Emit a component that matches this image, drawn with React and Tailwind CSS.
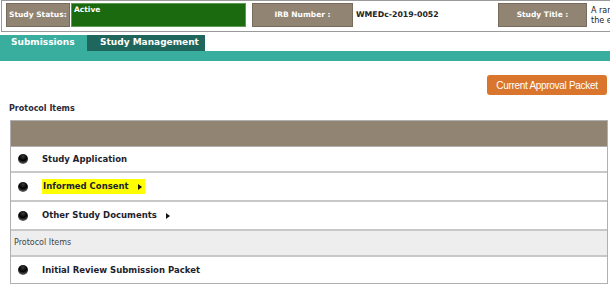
import React from "react";

const Bullet = () => (
  <span className="inline-block shrink-0 w-[10px] h-[10px] rounded-full bg-[radial-gradient(circle_at_50%_25%,#3a3a3a_0%,#000_45%,#9a9a9a_100%)]" />
);

const Caret = () => (
  <svg width="4" height="6" viewBox="0 0 4 6" className="ml-[9px] inline-block">
    <path d="M0 0 L4 3 L0 6 Z" fill="#111" />
  </svg>
);

const rows = [
  { label: "Study Application", h: "h-[26px]" },
  { label: "Informed Consent", h: "h-[29px]", caret: true, highlight: true },
  { label: "Other Study Documents", h: "h-[29px]", caret: true },
];

export default function App() {
  return (
    <div className="w-[610px] h-[287px] bg-white overflow-hidden font-['DejaVu_Sans',sans-serif]">
      {/* study header */}
      <div className="ml-[1px] h-[32px] border border-r-0 border-[#9a9a9a] flex items-start pl-[4px] pt-[2px] whitespace-nowrap overflow-hidden">
        <div className="shrink-0 w-[64px] h-[24px] bg-[#918472] border border-[#776b5d] flex items-center pl-[2px] text-white font-bold text-[7.5px]">
          Study Status:
        </div>
        <div className="shrink-0 ml-[1px] w-[175px] h-[24px] bg-[#1b6a10] border border-[#5f9a52] pl-[2px] pt-[1px] text-white font-bold text-[7.5px] leading-[10px]">
          Active
        </div>
        <div className="shrink-0 ml-[6px] w-[101px] h-[24px] bg-[#918472] border border-[#776b5d] flex items-center justify-center text-white font-bold text-[7.5px]">
          IRB Number :
        </div>
        <div className="shrink-0 ml-[3px] w-[142px] h-[24px] flex items-center text-[#222] font-bold text-[7.8px]">
          WMEDc-2019-0052
        </div>
        <div className="shrink-0 w-[89px] h-[24px] bg-[#918472] border border-[#776b5d] flex items-center justify-center text-white font-bold text-[7.5px]">
          Study Title :
        </div>
        <div className="shrink-0 ml-[4px] pt-[3px] text-[8px] leading-[10px] text-[#222]">
          <div>A randomized trial of</div>
          <div>the effect of</div>
        </div>
      </div>

      {/* tabs */}
      <div className="mt-[3px] flex h-[16px]">
        <div className="w-[87px] bg-[#39ae9f] text-white font-bold text-[9px] flex items-center pl-[11px]">
          Submissions
        </div>
        <div className="w-[118px] bg-[#1f675c] text-white font-bold text-[9px] flex items-center pl-[13px]">
          Study Management
        </div>
      </div>
      <div className="h-[10px] bg-[#39ae9f]" />

      {/* approval button */}
      <div className="flex justify-end pr-[3px] mt-[14px]">
        <button className="w-[120px] h-[20px] bg-[#d9752d] rounded-[3px] text-white text-[10px] font-['Liberation_Sans',sans-serif] tracking-[-0.3px]">
          Current Approval Packet
        </button>
      </div>

      <div className="mt-[8px] pl-[9px] text-[8px] font-bold text-[#2b2a3a]">Protocol Items</div>

      {/* protocol table */}
      <div className="mt-[5px] ml-[10px] w-[598px] border border-[#b0b0b0]">
        <div className="h-[26px] bg-[#918472] border-b border-[#b0b0b0]" />
        {rows.map((r) => (
          <div key={r.label} className={`${r.h} border-b-2 border-[#c8c8c8] flex items-center pl-[7px]`}>
            <Bullet />
            <span className={`ml-[14px] flex items-center text-[8.5px] font-bold text-[#1e1e2e] ${r.highlight ? "bg-[#ffff00] -ml-[1px] pl-[1px] pr-[3px] py-[1px]" : ""}`}>
              {r.label}
              {r.caret && <Caret />}
            </span>
          </div>
        ))}
        <div className="h-[26px] bg-[#eeeeee] border-b-2 border-[#c8c8c8] flex items-center pl-[3px] text-[8px] text-[#444]">
          Protocol Items
        </div>
        <div className="h-[26px] flex items-center pl-[7px]">
          <Bullet />
          <span className="ml-[14px] text-[8.5px] font-bold text-[#1e1e2e]">Initial Review Submission Packet</span>
        </div>
      </div>
    </div>
  );
}
